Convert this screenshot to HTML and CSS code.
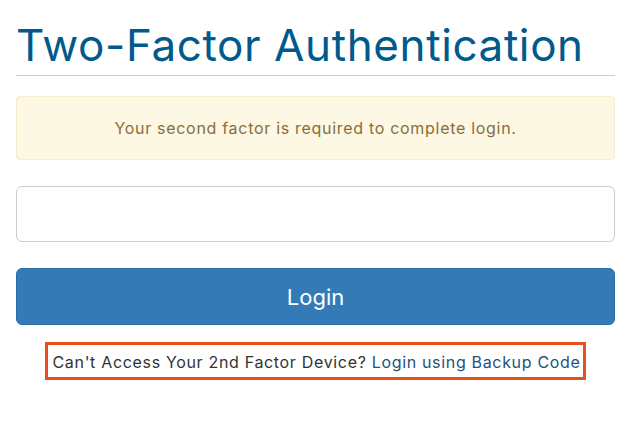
FILE: index.html
```html
<!DOCTYPE html>
<html lang="en">
<head>
    <meta charset="UTF-8">
    <title>Two-Factor Authentication</title>
    <link rel="stylesheet" href="styles.css">
</head>
<body>
<div class="login-box">
    <h1 class="page-title">Two-Factor Authentication</h1>
    <div class="alert">Your second factor is required to complete login.</div>
    <form class="twofa-form">
        <input type="text" class="code-input" name="code">
        <button type="submit" class="btn-login">Login</button>
    </form>
    <div class="backup">
        <span class="backup-box">Can't Access Your 2nd Factor Device? <a href="#">Login using Backup Code</a></span>
    </div>
</div>
</body>
</html>
```

FILE: styles.css
```css
body {
    margin: 0;
    font-family: Inter, "Noto Sans", sans-serif;
    background: #fff;
    color: #333;
}

.login-box {
    padding: 17px 19px 0 16px;
}

.page-title {
    margin: 0;
    font-size: 44px;
    font-weight: 400;
    letter-spacing: 0.6px;
    line-height: 56px;
    color: #005a8c;
    padding-bottom: 2px;
    border-bottom: 1px solid #ccc;
}

.alert {
    margin-top: 20px;
    height: 62px;
    display: flex;
    align-items: center;
    justify-content: center;
    background: #fcf8e3;
    border: 1px solid #faebcc;
    border-radius: 4px;
    color: #8a6d3b;
    font-size: 16px;
    letter-spacing: 0.7px;
}

.twofa-form {
    display: flex;
    flex-direction: column;
    gap: 26px;
    margin-top: 26px;
}

.code-input {
    height: 56px;
    box-sizing: border-box;
    border: 1px solid #ccc;
    border-radius: 6px;
    font-size: 18px;
    padding: 0 16px;
}

.btn-login {
    height: 57px;
    background: #337ab7;
    border: 1px solid #2e6da4;
    border-radius: 6px;
    color: #fff;
    font-family: inherit;
    font-size: 22px;
}

.backup {
    margin-top: 17px;
    text-align: center;
}

.backup-box {
    display: inline-block;
    border: 3px solid #e8501b;
    padding: 7px 3px 4px 5px;
    font-size: 16px;
    line-height: 21px;
    letter-spacing: 0.67px;
    color: #333;
}

.backup-box a {
    color: #23527c;
    text-decoration: none;
}
```
